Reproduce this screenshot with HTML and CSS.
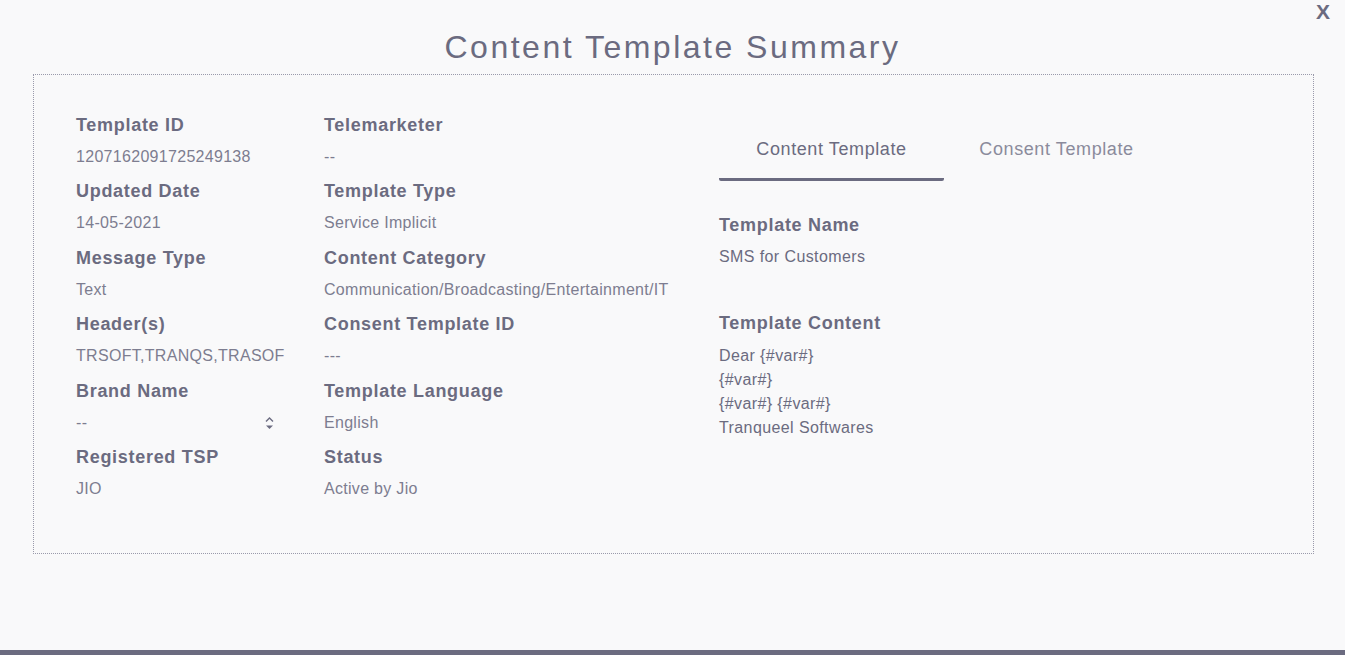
FILE: index.html
```html
<!DOCTYPE html>
<html>
<head>
	<meta http-equiv="content-type" content="text/html; charset=utf-8" />
	<title>Content Template Summary</title>
	<link rel="stylesheet" href="styles.css">
</head>
<body>
	<div class="modal">
		<span class="close">X</span>
		<h1>Content Template Summary</h1>

		<div class="summary">
			<div class="column">
				<div class="field">
					<div class="label">Template ID</div>
					<div class="value">1207162091725249138</div>
				</div>
				<div class="field">
					<div class="label">Updated Date</div>
					<div class="value">14-05-2021</div>
				</div>
				<div class="field">
					<div class="label">Message Type</div>
					<div class="value">Text</div>
				</div>
				<div class="field">
					<div class="label">Header(s)</div>
					<div class="value">TRSOFT,TRANQS,TRASOF</div>
				</div>
				<div class="field">
					<div class="label">Brand Name</div>
					<div class="value select">
						<span>--</span>
						<svg class="spin" width="9" height="14" viewBox="0 0 9 14">
							<path d="M1 5.5 L4.5 2 L8 5.5" fill="none" stroke="#6b6b80" stroke-width="1.4" />
							<path d="M1 9.5 L8 9.5 L4.5 13 Z" fill="#6b6b80" />
						</svg>
					</div>
				</div>
				<div class="field">
					<div class="label">Registered TSP</div>
					<div class="value">JIO</div>
				</div>
			</div>

			<div class="column">
				<div class="field">
					<div class="label">Telemarketer</div>
					<div class="value">--</div>
				</div>
				<div class="field">
					<div class="label">Template Type</div>
					<div class="value">Service Implicit</div>
				</div>
				<div class="field">
					<div class="label">Content Category</div>
					<div class="value">Communication/Broadcasting/Entertainment/IT</div>
				</div>
				<div class="field">
					<div class="label">Consent Template ID</div>
					<div class="value">---</div>
				</div>
				<div class="field">
					<div class="label">Template Language</div>
					<div class="value">English</div>
				</div>
				<div class="field">
					<div class="label">Status</div>
					<div class="value">Active by Jio</div>
				</div>
			</div>

			<div class="column">
				<div class="tabs">
					<div class="tab active">Content Template</div>
					<div class="tab">Consent Template</div>
				</div>
				<div class="label name-label">Template Name</div>
				<div class="value dark">SMS for Customers</div>

				<div class="label content-label">Template Content</div>
				<div class="value dark message">
					Dear {#var#}<br>
					{#var#}<br>
					{#var#} {#var#}<br>
					Tranqueel Softwares
				</div>
			</div>
		</div>
	</div>
</body>
</html>
```

FILE: styles.css
```css
body {
	font-family: "Liberation Sans", Arial, sans-serif;
	background-color: #f9f9fa;
	color: #6b6b80;
	margin: 0;
	padding: 0;
}

/* Modal page with the dark bar at the bottom */
.modal {
	position: relative;
	height: 623px;
	padding-top: 27px;
	border-bottom: 5px solid #6b6b80;
}

.close {
	position: absolute;
	top: 0;
	right: 15px;
	font-size: 21px;
	font-weight: bold;
	cursor: pointer;
}

h1 {
	margin: 0 0 7px;
	font-size: 32px;
	line-height: 40px;
	font-weight: normal;
	letter-spacing: 2.5px;
	text-align: center;
}

/* Dotted summary box */
.summary {
	display: grid;
	grid-template-columns: 248px 395px 1fr;
	margin: 0 31px 0 33px;
	padding: 39px 42px 38px;
	border: 1px dotted #9a9aab;
	height: 401px;
}

.field {
	margin-bottom: 12.4px;
}

.label {
	font-size: 18px;
	line-height: 22px;
	font-weight: bold;
	letter-spacing: 0.7px;
}

.value {
	margin-top: 10px;
	font-size: 16px;
	line-height: 22px;
	letter-spacing: 0.3px;
	color: #7d7d90;
}

.value.dark {
	color: #6b6b80;
	letter-spacing: 0.4px;
}

.select {
	display: flex;
	justify-content: space-between;
	align-items: center;
	width: 198px;
}

/* Tabs in the right column */
.tabs {
	display: flex;
	padding-top: 24px;
}

.tab {
	width: 225px;
	padding-bottom: 18px;
	border-bottom: 3px solid transparent;
	font-size: 18px;
	line-height: 22px;
	letter-spacing: 0.6px;
	text-align: center;
	color: #8b8b9c;
}

.tab.active {
	color: #6b6b80;
	border-bottom-color: #6b6b80;
	border-radius: 2px;
}

.name-label {
	margin-top: 33px;
}

.content-label {
	margin-top: 44px;
}

.message {
	line-height: 24px;
	margin-top: 10px;
}
```
